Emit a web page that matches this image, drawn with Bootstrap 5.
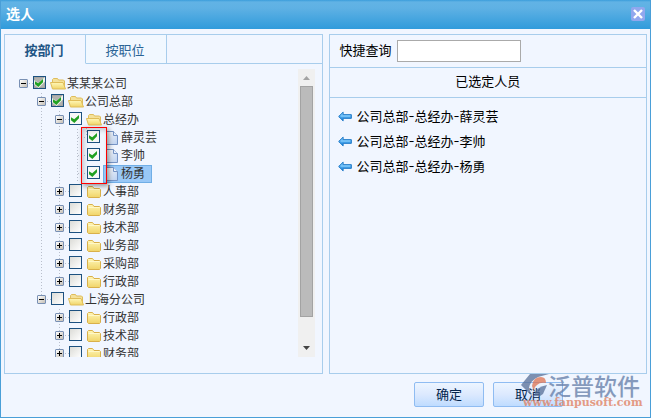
<!DOCTYPE html>
<html lang="zh-CN">
<head>
<meta charset="utf-8">
<meta name="viewport" content="width=device-width, initial-scale=1">
<title>选人</title>
<link href="https://cdn.jsdelivr.net/npm/bootstrap@5.3.0/dist/css/bootstrap.min.css" rel="stylesheet">
<style>
body{font-family:"Liberation Sans","Noto Sans CJK SC",sans-serif;font-size:13px;line-height:18px;color:#000}
.picker{background:#f1f6ff;border:1px solid #4a9fd8;border-top:0}
.picker-title{height:29px;background:linear-gradient(#3b9ddb 0,#62b3e5 2px,#5fb1e4 8px,#309bdb);color:#fff;font-size:14px;font-weight:700;padding:0 5px 0 5px}
.close-btn{width:14px;height:14px;background:#91a7ee;border-radius:2px}
.picker-body{padding:5px 3px 0;gap:6px}
.pane{border:1px solid #a8cdec;flex:1 1 0}
.tabs{height:29px}
.tabs button{width:81px;border:0;border-right:1px solid #a8cdec;border-bottom:1px solid #a8cdec;background:#f1f8ff;color:#2a6496;padding:4px 2px 0 0}
.tabs button.on{font-weight:700;color:#215585;border-bottom-color:transparent;background:none}
.tabs-rest{border-bottom:1px solid #a8cdec}
.tree-zone{padding:5px 7px 16px 14px}
.tree{color:#333;font-size:12px;padding-top:6px}
.tree ul ul,.tree ul{list-style:none;margin:0;padding:0}
.tree ul ul{margin-left:18px}
.tree ul ul>li{background:repeating-linear-gradient(#b9bfcc 0 1px,transparent 1px 3px) 4px 0/1px 100% no-repeat}
.tree ul ul>li:last-child{background-size:1px 9px}
.tree ul ul>li.more{background-size:1px 100%}
.node{height:18px}
.toggle{width:9px;height:9px;border:1px solid #7990b4;border-radius:1px;padding:0;background:linear-gradient(135deg,#fff,#c5bfb5);position:relative;flex:none}
.toggle::before,.toggle.plus::after{content:"";position:absolute;left:1px;top:3px;width:5px;height:1px;background:#000}
.toggle.plus::after{left:3px;top:1px;width:1px;height:5px}
.dots{width:5px;height:1px;background:repeating-linear-gradient(90deg,transparent 0 1px,#b9bfcc 1px 2px,transparent 2px 3px);flex:none}
.dots.long{width:10px;margin-left:4px}
.tick{appearance:none;width:13px;height:13px;border:1px solid #1c5180;background:linear-gradient(135deg,#dcdcd7,#fff);margin:0 0 2px;flex:none;position:relative}
.tick:checked{background:#f8f8f7}
.tick.part{background:#b1b1ae;box-shadow:inset 0 0 0 1px #a5a5a3}
.tick:checked::before,.tick.part::after{content:"";position:absolute;left:1px;top:2px;width:8px;height:8px;background:#21a121;clip-path:polygon(0 28%,40% 54%,100% 0,100% 40%,42% 100%,0 66%)}
.tick.part::after{left:1px;top:2px;z-index:1}
.tick.part::before{left:0;top:0;width:11px;height:11px;background:#eef4ec}
.node label{margin-left:4px;gap:1px;height:18px;white-space:nowrap}
.leaf label{margin-left:3px;gap:2px;padding:0 6px 0 1px;border:1px solid transparent}
.leaf label.picked{background:#99c8f7;border-color:#70aee6}
.group{position:relative}
.focus-frame{position:absolute;left:8px;top:-2px;width:26px;height:57px;border:1px solid #f00;background:#40506a14;box-shadow:2px 2px 5px #0006,inset 2px 2px 5px #0003;pointer-events:none}
.scroll{width:17px;background:#f0f0f0;flex:none}
.scroll svg{height:17px;width:17px;flex:none}
.thumb{margin:0 2px;background:#bbb;border:1px solid #a3a3a3;flex:0 0 91%}
.search-row{height:33px;border-bottom:1px solid #a8cdec;padding-left:10px;gap:5px}
.search-row input{width:124px;height:22px;border:1px solid #aaa;background:#fff;padding:0 4px}
.head-row{height:30px;border-bottom:1px solid #a8cdec}
.chosen{padding:6px 8px;font-family:Inter,"Noto Sans CJK SC",sans-serif}
.chosen li{height:25px;gap:5px}
.actions{height:43px;padding-right:87px;gap:9px;padding-top:8px;position:relative}
.act{width:70px;height:25px;border:1px solid #8fbcf2;border-radius:2px;background:linear-gradient(#edf5ff,#dce9fe 50%,#bfdcff);color:#03244c;padding:0}
.brand{position:absolute;right:5px;top:0;width:124px;height:38px;pointer-events:none}
</style>
<script src="https://cdn.jsdelivr.net/npm/bootstrap@5.3.0/dist/js/bootstrap.bundle.min.js"></script>
</head>
<body>
<svg width="0" height="0" class="position-absolute" aria-hidden="true">
<defs>
<linearGradient id="gy" x2="0" y2="1"><stop stop-color="#fff7b8"/><stop offset="1" stop-color="#f0d468"/></linearGradient>
<linearGradient id="gf" x2="1" y2="1"><stop stop-color="#fff"/><stop offset="1" stop-color="#b9cff0"/></linearGradient>
<linearGradient id="gb" x2="0" y2="1"><stop stop-color="#8fd4ff"/><stop offset="1" stop-color="#1580dc"/></linearGradient>
<symbol id="open" viewBox="0 0 16 12"><path d="M2.5 6V1.500l1-1h4l1 1.500h5l1 1V10" fill="#f4e19a" stroke="#dfbd5c"/><path d="M.5 4.500h12.500l2.500 6.500H2.500z" fill="url(#gy)" stroke="#e0bd59"/></symbol>
<symbol id="shut" viewBox="0 0 16 12"><path d="M1.500 10.500v-9l1-1h4l1.500 2h5.500l1 1v7l-1 1h-11z" fill="url(#gy)" stroke="#d9b04a"/><path d="M2.500 3.500h11" stroke="#fff8c8"/></symbol>
<symbol id="file" viewBox="0 0 12 14"><path d="M.5.5h7l4 4v9H.5z" fill="url(#gf)" stroke="#7795c6"/><path d="M7.500.5v4h4" fill="#eaf2ff" stroke="#7795c6"/></symbol>
<symbol id="arrow" viewBox="0 0 15 11"><path d="M.7 5.500 5.500.8v2.700h8.800v4H5.500v2.700z" fill="url(#gb)" stroke="#1673c4"/><path d="M3 5h10" stroke="#8fd4ff"/></symbol>
</defs>
</svg>
<main class="picker vh-100 d-flex flex-column overflow-hidden">
<header class="picker-title d-flex align-items-center justify-content-between"><span>选人</span>
<button class="close-btn border-0 p-0 d-flex" aria-label="关闭"><svg width="14" height="14" viewBox="0 0 14 14"><path d="M3 3l8 8M11 3l-8 8" stroke="#fff" stroke-width="2.400"/></svg></button></header>
<div class="picker-body d-flex flex-grow-1 overflow-hidden">
<section class="pane d-flex flex-column overflow-hidden">
<div class="tabs d-flex flex-shrink-0" role="tablist"><button class="on" role="tab" aria-selected="true">按部门</button><button role="tab" aria-selected="false">按职位</button><div class="tabs-rest flex-grow-1"></div></div>
<div class="tree-zone d-flex flex-grow-1 overflow-hidden">
<div class="tree flex-grow-1 overflow-hidden">
<ul>
<li><div class="node d-flex align-items-center"><button class="toggle" aria-label="收起"></button><i class="dots"></i><input class="tick part" type="checkbox" id="n1" checked><label for="n1" class="d-flex align-items-center"><svg width="16" height="12"><use href="#open"/></svg>某某某公司</label></div>
<ul>
<li><div class="node d-flex align-items-center"><button class="toggle" aria-label="收起"></button><i class="dots"></i><input class="tick part" type="checkbox" id="n2" checked><label for="n2" class="d-flex align-items-center"><svg width="16" height="12"><use href="#open"/></svg>公司总部</label></div>
<ul>
<li><div class="node d-flex align-items-center"><button class="toggle" aria-label="收起"></button><i class="dots"></i><input class="tick" type="checkbox" id="n3" checked><label for="n3" class="d-flex align-items-center"><svg width="16" height="12"><use href="#open"/></svg>总经办</label></div>
<ul class="group">
<li class="node leaf d-flex align-items-center"><i class="dots long"></i><input class="tick" type="checkbox" id="p1" checked><label for="p1" class="d-flex align-items-center"><svg width="14" height="14"><use href="#file"/></svg>薛灵芸</label></li>
<li class="node leaf d-flex align-items-center"><i class="dots long"></i><input class="tick" type="checkbox" id="p2" checked><label for="p2" class="d-flex align-items-center"><svg width="14" height="14"><use href="#file"/></svg>李帅</label></li>
<li class="node leaf d-flex align-items-center"><i class="dots long"></i><input class="tick" type="checkbox" id="p3" checked><label for="p3" class="picked d-flex align-items-center"><svg width="14" height="14"><use href="#file"/></svg>杨勇</label></li>
<li class="focus-frame" aria-hidden="true"></li>
</ul></li>
<li class="node d-flex align-items-center"><button class="toggle plus" aria-label="展开"></button><i class="dots"></i><input class="tick" type="checkbox" id="d1"><label for="d1" class="d-flex align-items-center"><svg width="16" height="12"><use href="#shut"/></svg>人事部</label></li>
<li class="node d-flex align-items-center"><button class="toggle plus" aria-label="展开"></button><i class="dots"></i><input class="tick" type="checkbox" id="d2"><label for="d2" class="d-flex align-items-center"><svg width="16" height="12"><use href="#shut"/></svg>财务部</label></li>
<li class="node d-flex align-items-center"><button class="toggle plus" aria-label="展开"></button><i class="dots"></i><input class="tick" type="checkbox" id="d3"><label for="d3" class="d-flex align-items-center"><svg width="16" height="12"><use href="#shut"/></svg>技术部</label></li>
<li class="node d-flex align-items-center"><button class="toggle plus" aria-label="展开"></button><i class="dots"></i><input class="tick" type="checkbox" id="d4"><label for="d4" class="d-flex align-items-center"><svg width="16" height="12"><use href="#shut"/></svg>业务部</label></li>
<li class="node d-flex align-items-center"><button class="toggle plus" aria-label="展开"></button><i class="dots"></i><input class="tick" type="checkbox" id="d5"><label for="d5" class="d-flex align-items-center"><svg width="16" height="12"><use href="#shut"/></svg>采购部</label></li>
<li class="node d-flex align-items-center"><button class="toggle plus" aria-label="展开"></button><i class="dots"></i><input class="tick" type="checkbox" id="d6"><label for="d6" class="d-flex align-items-center"><svg width="16" height="12"><use href="#shut"/></svg>行政部</label></li>
</ul></li>
<li><div class="node d-flex align-items-center"><button class="toggle" aria-label="收起"></button><i class="dots"></i><input class="tick" type="checkbox" id="n4"><label for="n4" class="d-flex align-items-center"><svg width="16" height="12"><use href="#open"/></svg>上海分公司</label></div>
<ul>
<li class="node d-flex align-items-center"><button class="toggle plus" aria-label="展开"></button><i class="dots"></i><input class="tick" type="checkbox" id="s1"><label for="s1" class="d-flex align-items-center"><svg width="16" height="12"><use href="#shut"/></svg>行政部</label></li>
<li class="node d-flex align-items-center"><button class="toggle plus" aria-label="展开"></button><i class="dots"></i><input class="tick" type="checkbox" id="s2"><label for="s2" class="d-flex align-items-center"><svg width="16" height="12"><use href="#shut"/></svg>技术部</label></li>
<li class="node more d-flex align-items-center"><button class="toggle plus" aria-label="展开"></button><i class="dots"></i><input class="tick" type="checkbox" id="s3"><label for="s3" class="d-flex align-items-center"><svg width="16" height="12"><use href="#shut"/></svg>财务部</label></li>
</ul></li>
</ul></li>
</ul>
</div>
<div class="scroll d-flex flex-column" aria-hidden="true"><svg viewBox="0 0 17 17"><path d="M5 11l3.500-4 3.500 4z" fill="#a3a3a3"/></svg><div class="flex-grow-1 d-flex flex-column"><div class="thumb"></div></div><svg viewBox="0 0 17 17"><path d="M5 6l3.500 4L12 6z" fill="#444"/></svg></div>
</div>
</section>
<section class="pane overflow-hidden">
<div class="search-row d-flex align-items-center"><label for="q">快捷查询</label><input id="q" type="text"></div>
<div class="head-row d-flex align-items-center justify-content-center">已选定人员</div>
<ul class="chosen list-unstyled mb-0">
<li class="d-flex align-items-center"><svg width="14" height="11"><use href="#arrow"/></svg>公司总部-总经办-薛灵芸</li>
<li class="d-flex align-items-center"><svg width="14" height="11"><use href="#arrow"/></svg>公司总部-总经办-李帅</li>
<li class="d-flex align-items-center"><svg width="14" height="11"><use href="#arrow"/></svg>公司总部-总经办-杨勇</li>
</ul>
</section>
</div>
<footer class="actions d-flex justify-content-end flex-shrink-0"><button class="act">确定</button><button class="act">取消</button>
<svg class="brand" viewBox="0 0 124 38" aria-hidden="true"><g opacity=".75"><path d="M9 0h19L17 3Q9 7 8 14l3 8L0 11z" fill="#576e97"/><path d="M11 12Q12 3 20 3q5 0 5 6-6-1-9 2-3 2-3 6z" fill="#df7250"/><path d="M13 22q1-9 13-11l-4 9-3 2z" fill="#576e97"/><text x="27" y="21" font-family="Noto Sans CJK SC,sans-serif" font-size="23" font-weight="500" fill="#627ba6">泛普软件</text><text x="2" y="32" font-family="DejaVu Serif,serif" font-size="11" font-weight="700" fill="#df7c5c">www.fanpusoft.com</text></g></svg>
</footer>
</main>
</body>
</html>
